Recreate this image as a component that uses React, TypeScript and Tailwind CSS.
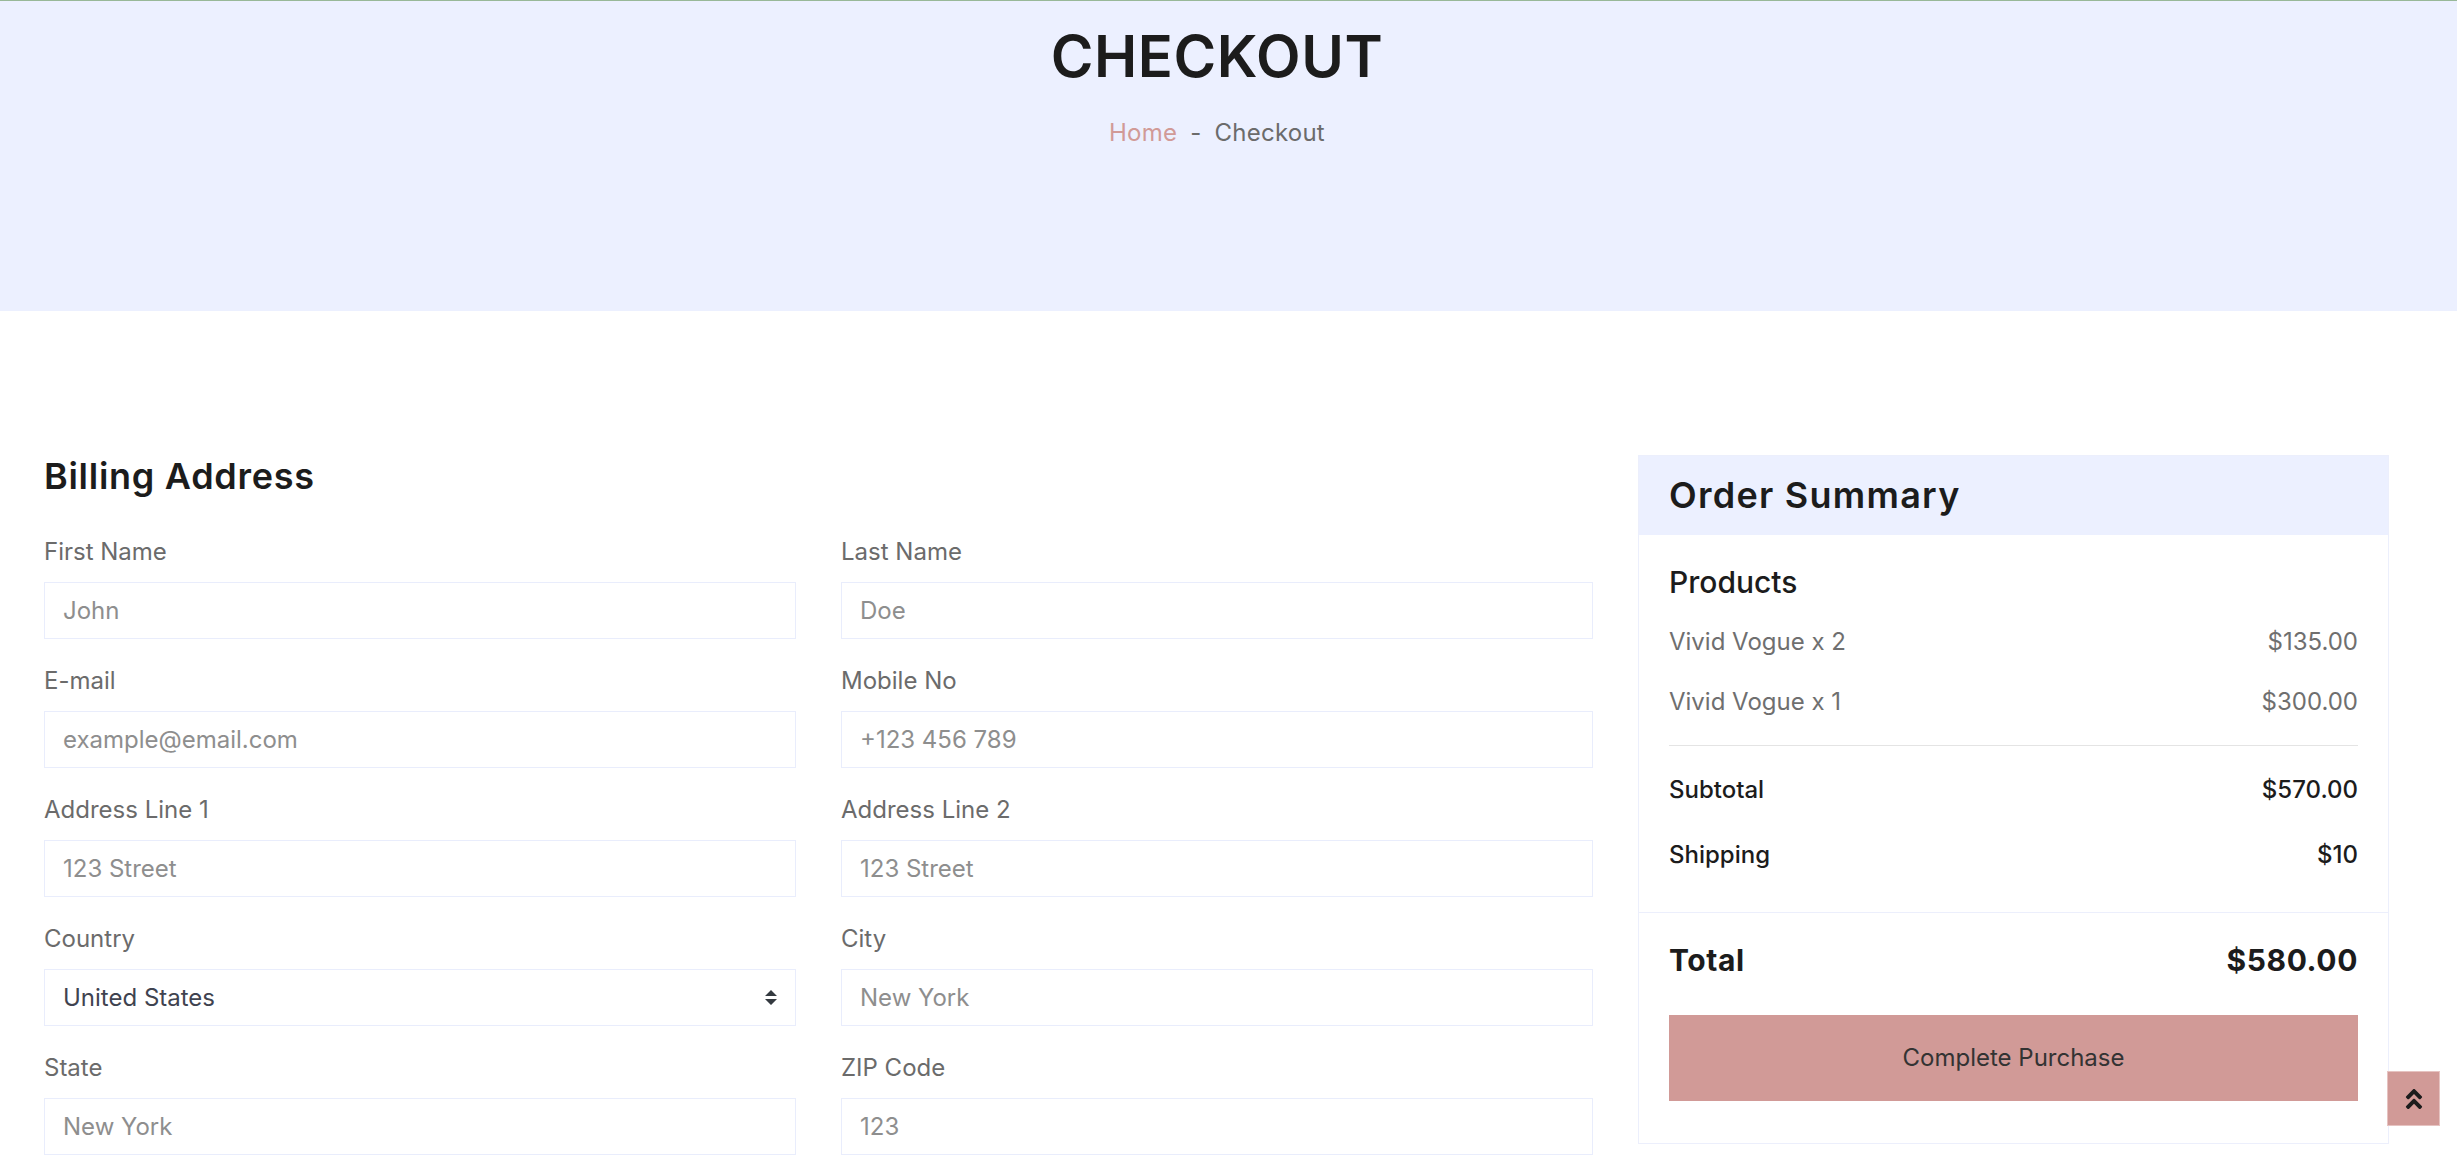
import React from "react";
import { FaAngleDoubleUp } from "react-icons/fa";

type Field = { label: string; placeholder?: string; select?: string };

const fields: Field[] = [
  { label: "First Name", placeholder: "John" },
  { label: "Last Name", placeholder: "Doe" },
  { label: "E-mail", placeholder: "example@email.com" },
  { label: "Mobile No", placeholder: "+123 456 789" },
  { label: "Address Line 1", placeholder: "123 Street" },
  { label: "Address Line 2", placeholder: "123 Street" },
  { label: "Country", select: "United States" },
  { label: "City", placeholder: "New York" },
  { label: "State", placeholder: "New York" },
  { label: "ZIP Code", placeholder: "123" },
];

function FormField({ f }: { f: Field }) {
  return (
    <div className="mb-[24px] flex flex-col">
      <label className="mb-[12px] h-[36px] text-[24px] leading-[36px] text-[#6b6b6b]">{f.label}</label>
      {f.select ? (
        <div className="relative h-[57px]">
          <select
            defaultValue={f.select}
            className="h-[57px] w-full appearance-none border border-[#e9edfc] bg-white pl-[18px] pr-[48px] text-[24px] text-[#3f4350] outline-none"
          >
            <option>United States</option>
            <option>Afghanistan</option>
            <option>Albania</option>
          </select>
          <svg
            className="pointer-events-none absolute right-[19px] top-[21px]"
            width="12"
            height="15"
            viewBox="0 0 4 5"
          >
            <path d="M2 0L0 2h4zm0 5L0 3h4z" fill="#343a40" />
          </svg>
        </div>
      ) : (
        <input
          type="text"
          placeholder={f.placeholder}
          className="h-[57px] w-full border border-[#e9edfc] bg-white px-[18px] text-[24px] text-[#3f4350] outline-none placeholder:text-[#8e8e8e]"
        />
      )}
    </div>
  );
}

function Row({ left, right, className }: { left: string; right: string; className: string }) {
  return (
    <div className={"flex items-center justify-between " + className}>
      <span>{left}</span>
      <span>{right}</span>
    </div>
  );
}

export default function App() {
  return (
    <div className="relative h-[1159px] overflow-hidden bg-white font-['Inter',sans-serif] text-[24px] leading-[36px] text-[#6b6b6b]">
      <section className="flex h-[311px] flex-col items-center border-t border-[#98b898] bg-[#ecf0ff] pr-[23px] pt-[19px]">
        <h1 className="text-[58px] font-semibold leading-[72px] tracking-[0.01em] text-[#1c1c1c]">CHECKOUT</h1>
        <div className="mt-[23px] flex items-center gap-[13px] text-[24px] leading-[36px] tracking-[0.01em] text-[#6b6b6b]">
          <span className="text-[#d19a97]">Home</span>
          <span>-</span>
          <span>Checkout</span>
        </div>
      </section>

      <main className="flex items-start gap-[45px] pl-[44px] pr-[68px] pt-[144px]">
        <div className="flex-1">
          <h4 className="mb-[36px] text-[36px] font-semibold leading-[43px] tracking-[0.02em] text-[#1c1c1c]">Billing Address</h4>
          <div className="grid grid-cols-2 gap-x-[45px]">
            {fields.map((f) => (
              <FormField key={f.label} f={f} />
            ))}
          </div>
        </div>

        <aside className="w-[751px] border border-[#eceffc]">
          <div className="bg-[#ecf0ff] px-[30px] py-[18px]">
            <h4 className="text-[36px] font-semibold leading-[43px] tracking-[0.035em] text-[#1c1c1c]">Order Summary</h4>
          </div>
          <div className="px-[30px] pb-[39px] pt-[29px]">
            <h5 className="mb-[24px] text-[30px] font-medium leading-[36px] text-[#1c1c1c]">Products</h5>
            <Row left="Vivid Vogue x 2" right="$135.00" className="mb-[24px] text-[#6f6f6f]" />
            <Row left="Vivid Vogue x 1" right="$300.00" className="text-[#6f6f6f]" />
            <div className="mb-[26px] mt-[25px] h-px bg-[#e4e4e4]" />
            <Row left="Subtotal" right="$570.00" className="mb-[29px] font-medium text-[#1c1c1c]" />
            <Row left="Shipping" right="$10" className="font-medium text-[#1c1c1c]" />
          </div>
          <div className="border-t border-[#eceffc] px-[30px] pb-[42px] pt-[29px]">
            <Row left="Total" right="$580.00" className="mb-[37px] text-[30px] font-bold tracking-[0.02em] text-[#1c1c1c]" />
            <button className="h-[86px] w-full bg-[#d19a97] text-[24px] text-[#333333]">Complete Purchase</button>
          </div>
        </aside>
      </main>

      <button className="absolute bottom-[33px] right-[17px] flex h-[55px] w-[53px] items-center justify-center border border-[#e6c3c1] bg-[#d19a97] text-[#1c1c1c]">
        <FaAngleDoubleUp size={26} />
      </button>
    </div>
  );
}
